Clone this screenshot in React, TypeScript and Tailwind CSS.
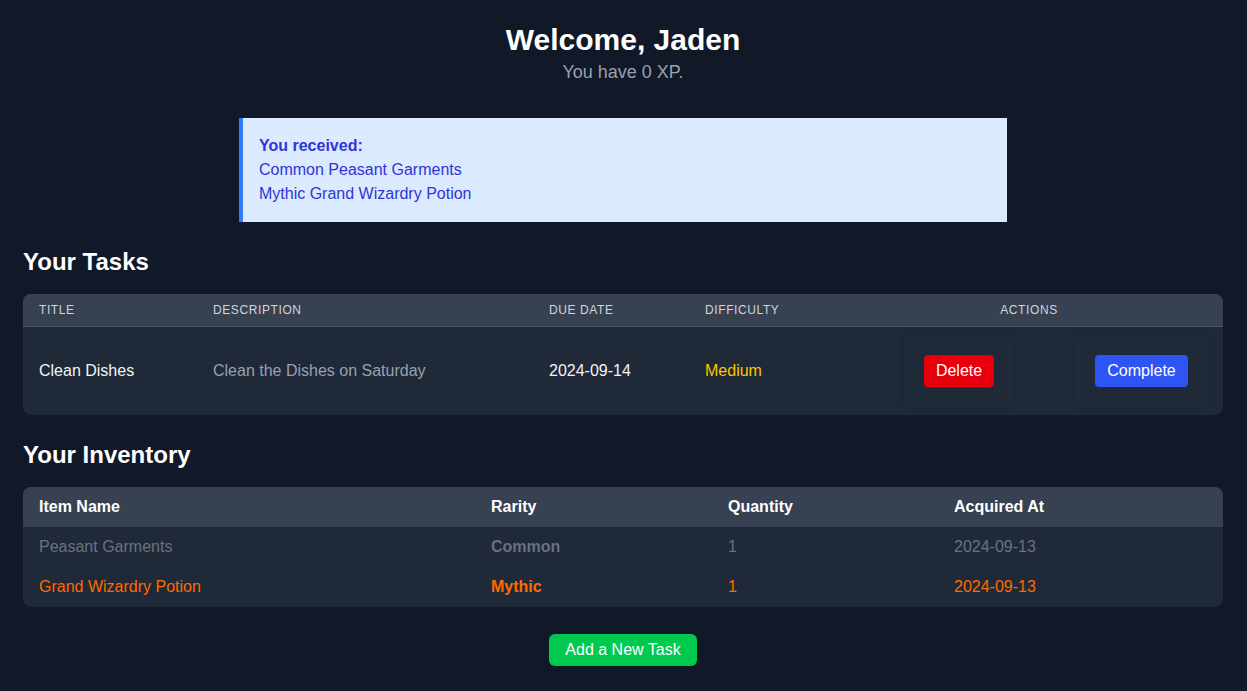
import React from "react";

export default function App() {
  return (
    <div
      className="min-h-[691px] bg-[#111827] pl-[23px] pr-[24px] pt-[22px] pb-6 text-white"
      style={{ fontFamily: '"Liberation Sans", Arial, sans-serif' }}
    >
      <div className="text-center">
        <h1 className="text-3xl font-bold leading-9">Welcome, Jaden</h1>
        <p className="text-lg leading-7 text-[#99a1af]">You have 0 XP.</p>
      </div>

      <div className="mx-auto mt-8 w-[768px] border-l-4 border-[#2f7bff] bg-[#dbeafe] p-4 text-base leading-6 text-[#2f35d8]">
        <p className="font-bold">You received:</p>
        <p>Common Peasant Garments</p>
        <p>Mythic Grand Wizardry Potion</p>
      </div>

      <h2 className="mt-6 mb-4 text-2xl font-bold leading-8">Your Tasks</h2>
      <div className="overflow-hidden rounded-lg bg-[#1f2937]">
        <div className="grid grid-cols-[174px_336px_156px_200px_1fr] border-b border-[#4a5565] bg-[#374151] text-xs font-medium uppercase leading-4 tracking-wider text-[#d1d5dc]">
          <div className="px-4 py-2">Title</div>
          <div className="px-4 py-2">Description</div>
          <div className="px-4 py-2">Due Date</div>
          <div className="px-4 py-2">Difficulty</div>
          <div className="py-2 pr-[54px] text-center">Actions</div>
        </div>
        <div className="grid h-[88px] grid-cols-[174px_336px_156px_200px_1fr] items-center text-base">
          <div className="px-4 text-[#f3f4f6]">Clean Dishes</div>
          <div className="px-4 text-[#99a1af]">Clean the Dishes on Saturday</div>
          <div className="px-4 text-[#f3f4f6]">2024-09-14</div>
          <div className="px-4 text-[#fdc700]">Medium</div>
          <div className="flex items-center pl-[15px]">
            <div className="flex h-[74px] w-[110px] items-center justify-center rounded-sm shadow-[0_0_6px_rgba(0,0,0,0.09)]">
              <button className="rounded bg-[#e7000b] px-3 py-1 leading-6 text-white">Delete</button>
            </div>
            <div className="ml-[60px] flex h-[74px] w-[135px] items-center justify-center rounded-sm shadow-[0_0_6px_rgba(0,0,0,0.09)]">
              <button className="rounded bg-[#2f54f5] px-3 py-1 leading-6 text-white">Complete</button>
            </div>
          </div>
        </div>
      </div>

      <h2 className="mt-6 mb-4 text-2xl font-bold leading-8">Your Inventory</h2>
      <div className="overflow-hidden rounded-lg bg-[#1f2937] text-base leading-6">
        <div className="grid grid-cols-[452px_237px_226px_1fr] bg-[#374151] font-bold text-white">
          <div className="px-4 py-2">Item Name</div>
          <div className="px-4 py-2">Rarity</div>
          <div className="px-4 py-2">Quantity</div>
          <div className="px-4 py-2">Acquired At</div>
        </div>
        <div className="grid grid-cols-[452px_237px_226px_1fr] text-[#6a7282]">
          <div className="px-4 py-2">Peasant Garments</div>
          <div className="px-4 py-2 font-bold">Common</div>
          <div className="px-4 py-2">1</div>
          <div className="px-4 py-2">2024-09-13</div>
        </div>
        <div className="grid grid-cols-[452px_237px_226px_1fr] text-[#ff6900]">
          <div className="px-4 py-2">Grand Wizardry Potion</div>
          <div className="px-4 py-2 font-bold">Mythic</div>
          <div className="px-4 py-2">1</div>
          <div className="px-4 py-2">2024-09-13</div>
        </div>
      </div>

      <div className="mt-[27px] flex justify-center">
        <button className="rounded-md bg-[#00c950] px-4 py-1 text-base leading-6 text-white">
          Add a New Task
        </button>
      </div>
    </div>
  );
}
